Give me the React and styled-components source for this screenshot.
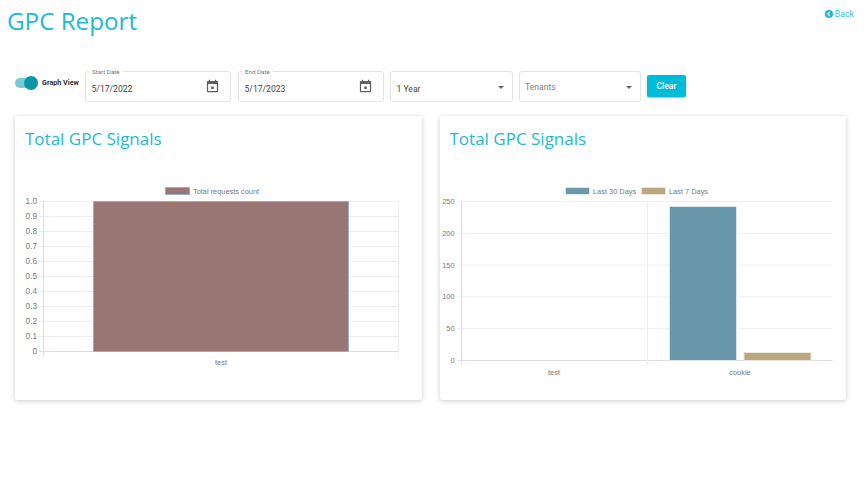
import React from "react";
import styled, { createGlobalStyle } from "styled-components";

const Global = createGlobalStyle`
  html, body { margin: 0; padding: 0; background: #fff; }
  body { font-family: Roboto, "Liberation Sans", sans-serif; width: 865px; height: 480px; overflow: hidden; }
`;

const Page = styled.div`
  width: 865px;
  height: 480px;
  overflow: hidden;
  box-sizing: border-box;
`;

const Header = styled.header`
  display: flex;
  justify-content: space-between;
  align-items: flex-start;
  height: 71px;
  padding: 0 11px 0 7px;
`;

const Title = styled.h1`
  margin: 3px 0 0;
  font: 400 24.2px/36px "Open Sans", sans-serif;
  color: #1cbad6;
`;

const BackLink = styled.a`
  display: flex;
  align-items: center;
  gap: 2px;
  margin-top: 8px;
  font-size: 8.8px;
  line-height: 12px;
  color: #35c2dc;
`;

const Toolbar = styled.div`
  display: flex;
  align-items: center;
  height: 31px;
  padding-left: 15px;
`;

const SwitchTrack = styled.span`
  position: relative;
  display: block;
  width: 22px;
  height: 10px;
  margin-bottom: 7px;
  border-radius: 5px;
  background: #75cbd3;
  flex: none;
`;

const SwitchThumb = styled.span`
  position: absolute;
  top: -2px;
  right: -1px;
  width: 14px;
  height: 14px;
  border-radius: 50%;
  background: #0b96a8;
`;

const SwitchLabel = styled.span`
  margin: 0 0 8px 5px;
  width: 43px;
  font-size: 7.2px;
  font-weight: 700;
  color: #2f2f2f;
  white-space: nowrap;
  flex: none;
`;

const Field = styled.div`
  position: relative;
  box-sizing: border-box;
  display: flex;
  align-items: center;
  justify-content: space-between;
  flex: none;
  width: ${(p) => p.$width}px;
  height: 31px;
  margin-right: ${(p) => p.$gap}px;
  padding: 0 ${(p) => p.$padRight}px 0 5.5px;
  border: 1px solid #e3e3e3;
  border-radius: 3px;
`;

const FieldLabel = styled.span`
  position: absolute;
  top: -4px;
  left: 3px;
  padding: 0 3px;
  background: #fff;
  font-size: 6.2px;
  line-height: 8px;
  color: #777;
`;

const FieldValue = styled.span`
  margin-top: ${(p) => p.$offset}px;
  font-size: 8.6px;
  color: ${(p) => p.$muted ? "#858585" : "#444"};
  white-space: nowrap;
`;

const Caret = styled.span`
  width: 0;
  height: 0;
  margin-top: 1px;
  border-left: 3px solid transparent;
  border-right: 3px solid transparent;
  border-top: 3px solid #666;
`;

const ClearButton = styled.button`
  flex: none;
  width: 39px;
  height: 22.5px;
  padding: 0;
  border: 0;
  border-radius: 2px;
  background: #00bcd8;
  color: #fff;
  font: 500 8.5px Roboto, sans-serif;
  box-shadow: 0 1px 2px rgba(0, 0, 0, 0.3);
  margin-top: -1.5px;
`;

const Cards = styled.section`
  display: flex;
  gap: 18px;
  margin-top: 14px;
  padding-left: 15px;
`;

const Card = styled.article`
  box-sizing: border-box;
  width: 406.5px;
  height: 284px;
  padding-top: 10px;
  background: #fff;
  border-radius: 3px;
  box-shadow: 0 1px 5px rgba(0, 0, 0, 0.22);
`;

const CardTitle = styled.h2`
  margin: 0 0 0 10px;
  font: 400 17px/26px "Open Sans", sans-serif;
  color: #1cbad6;
`;

const ChartSvg = styled.svg`
  display: block;
  opacity: 0.99;
`;

const ChartLabel = styled.text`
  font-family: "Liberation Sans", Arial, sans-serif;
  font-size: ${(p) => p.$size || 7.4}px;
  fill: #777;
`;

const Grid = styled.line`
  stroke: ${(p) => p.$strong ? "#dedede" : "#eeeeee"};
  stroke-width: 1;
`;

const CalendarIcon = () => (
  <svg width="15" height="15" viewBox="0 0 24 24" fill="#5f5f5f" aria-hidden="true">
    <path d="M10 12h4v4h-4zM16 1v2H8V1H6v2H5c-1.11 0-1.99.9-1.99 2L3 19c0 1.1.89 2 2 2h14c1.1 0 2-.9 2-2V5c0-1.1-.9-2-2-2h-1V1h-2zm3 18H5V8h14v11z" />
  </svg>
);

const BackIcon = () => (
  <svg width="8" height="8" viewBox="0 0 16 16" aria-hidden="true">
    <circle cx="8" cy="8" r="8" fill="#1cbad6" />
    <path d="M9.8 3.8 5.6 8l4.2 4.2" fill="none" stroke="#fff" strokeWidth="2.4" />
  </svg>
);

/* Chart coordinates are relative to the svg, which starts at the card's left
   edge and 36px under its top edge. */
const requestTicks = ["1.0", "0.9", "0.8", "0.7", "0.6", "0.5", "0.4", "0.3", "0.2", "0.1", "0"];

const RequestsChart = () => {
  const top = 49;
  const step = 15;
  return (
    <ChartSvg width="407" height="238" viewBox="0 0 407 238">
      <rect x="150.5" y="35.5" width="24" height="7" fill="#987472" stroke="#8fb2cf" />
      <ChartLabel x="178" y="42">Total requests count</ChartLabel>
      {requestTicks.map((t, i) => (
        <g key={t}>
          <Grid x1="24" x2="383.5" y1={top + i * step + 0.5} y2={top + i * step + 0.5} $strong={i === 10} />
          <ChartLabel $size={8.2} x="22" y={top + i * step + 3} textAnchor="end">{t}</ChartLabel>
        </g>
      ))}
      <Grid x1="28.5" x2="28.5" y1={top} y2={top + 155} $strong />
      <Grid x1="383.5" x2="383.5" y1={top} y2={top + 155} />
      <rect x="78.5" y={top + 0.5} width="255" height="150" fill="#987472" stroke="#8fb2cf" />
      <ChartLabel x="206" y="213" textAnchor="middle">test</ChartLabel>
    </ChartSvg>
  );
};

const signalTicks = ["250", "200", "150", "100", "50", "0"];

const SignalsChart = () => {
  const top = 49;
  const step = 31.8;
  return (
    <ChartSvg width="407" height="238" viewBox="0 0 407 238">
      <rect x="125.5" y="35.5" width="24" height="7" fill="#6797a9" stroke="#dfeaef" />
      <ChartLabel x="153" y="42">Last 30 Days</ChartLabel>
      <rect x="201.5" y="35.5" width="24" height="7" fill="#b9a681" stroke="#ece6d8" />
      <ChartLabel x="229" y="42">Last 7 Days</ChartLabel>
      {signalTicks.map((t, i) => (
        <g key={t}>
          <Grid x1="18" x2="392.5" y1={top + i * step + 0.5} y2={top + i * step + 0.5} $strong={i === 5} />
          <ChartLabel x="14.5" y={top + i * step + 3} textAnchor="end">{t}</ChartLabel>
        </g>
      ))}
      <Grid x1="21.5" x2="21.5" y1={top} y2={top + 164} $strong />
      <Grid x1="207.5" x2="207.5" y1={top} y2={top + 164} />
      <rect x="229.5" y="54.5" width="67" height="154" fill="#6797a9" stroke="#d8e6eb" />
      <rect x="304" y="200.5" width="67" height="8" fill="#b9a681" stroke="#ece6d8" />
      <ChartLabel x="114" y="223" textAnchor="middle">test</ChartLabel>
      <ChartLabel x="300" y="223" textAnchor="middle">cookie</ChartLabel>
    </ChartSvg>
  );
};

export default function App() {
  return (
    <Page>
      <Global />
      <Header>
        <Title>GPC Report</Title>
        <BackLink><BackIcon />Back</BackLink>
      </Header>
      <Toolbar>
        <SwitchTrack><SwitchThumb /></SwitchTrack>
        <SwitchLabel>Graph View</SwitchLabel>
        <Field $width={146} $gap={7} $padRight={10}>
          <FieldLabel>Start Date</FieldLabel>
          <FieldValue $offset={5}>5/17/2022</FieldValue>
          <CalendarIcon />
        </Field>
        <Field $width={146} $gap={6} $padRight={10}>
          <FieldLabel>End Date</FieldLabel>
          <FieldValue $offset={5}>5/17/2023</FieldValue>
          <CalendarIcon />
        </Field>
        <Field $width={122.5} $gap={6} $padRight={8}>
          <FieldValue $offset={5}>1 Year</FieldValue>
          <Caret />
        </Field>
        <Field $width={122.5} $gap={6} $padRight={8}>
          <FieldValue $offset={1} $muted>Tenants</FieldValue>
          <Caret />
        </Field>
        <ClearButton>Clear</ClearButton>
      </Toolbar>
      <Cards>
        <Card>
          <CardTitle>Total GPC Signals</CardTitle>
          <RequestsChart />
        </Card>
        <Card>
          <CardTitle>Total GPC Signals</CardTitle>
          <SignalsChart />
        </Card>
      </Cards>
    </Page>
  );
}
